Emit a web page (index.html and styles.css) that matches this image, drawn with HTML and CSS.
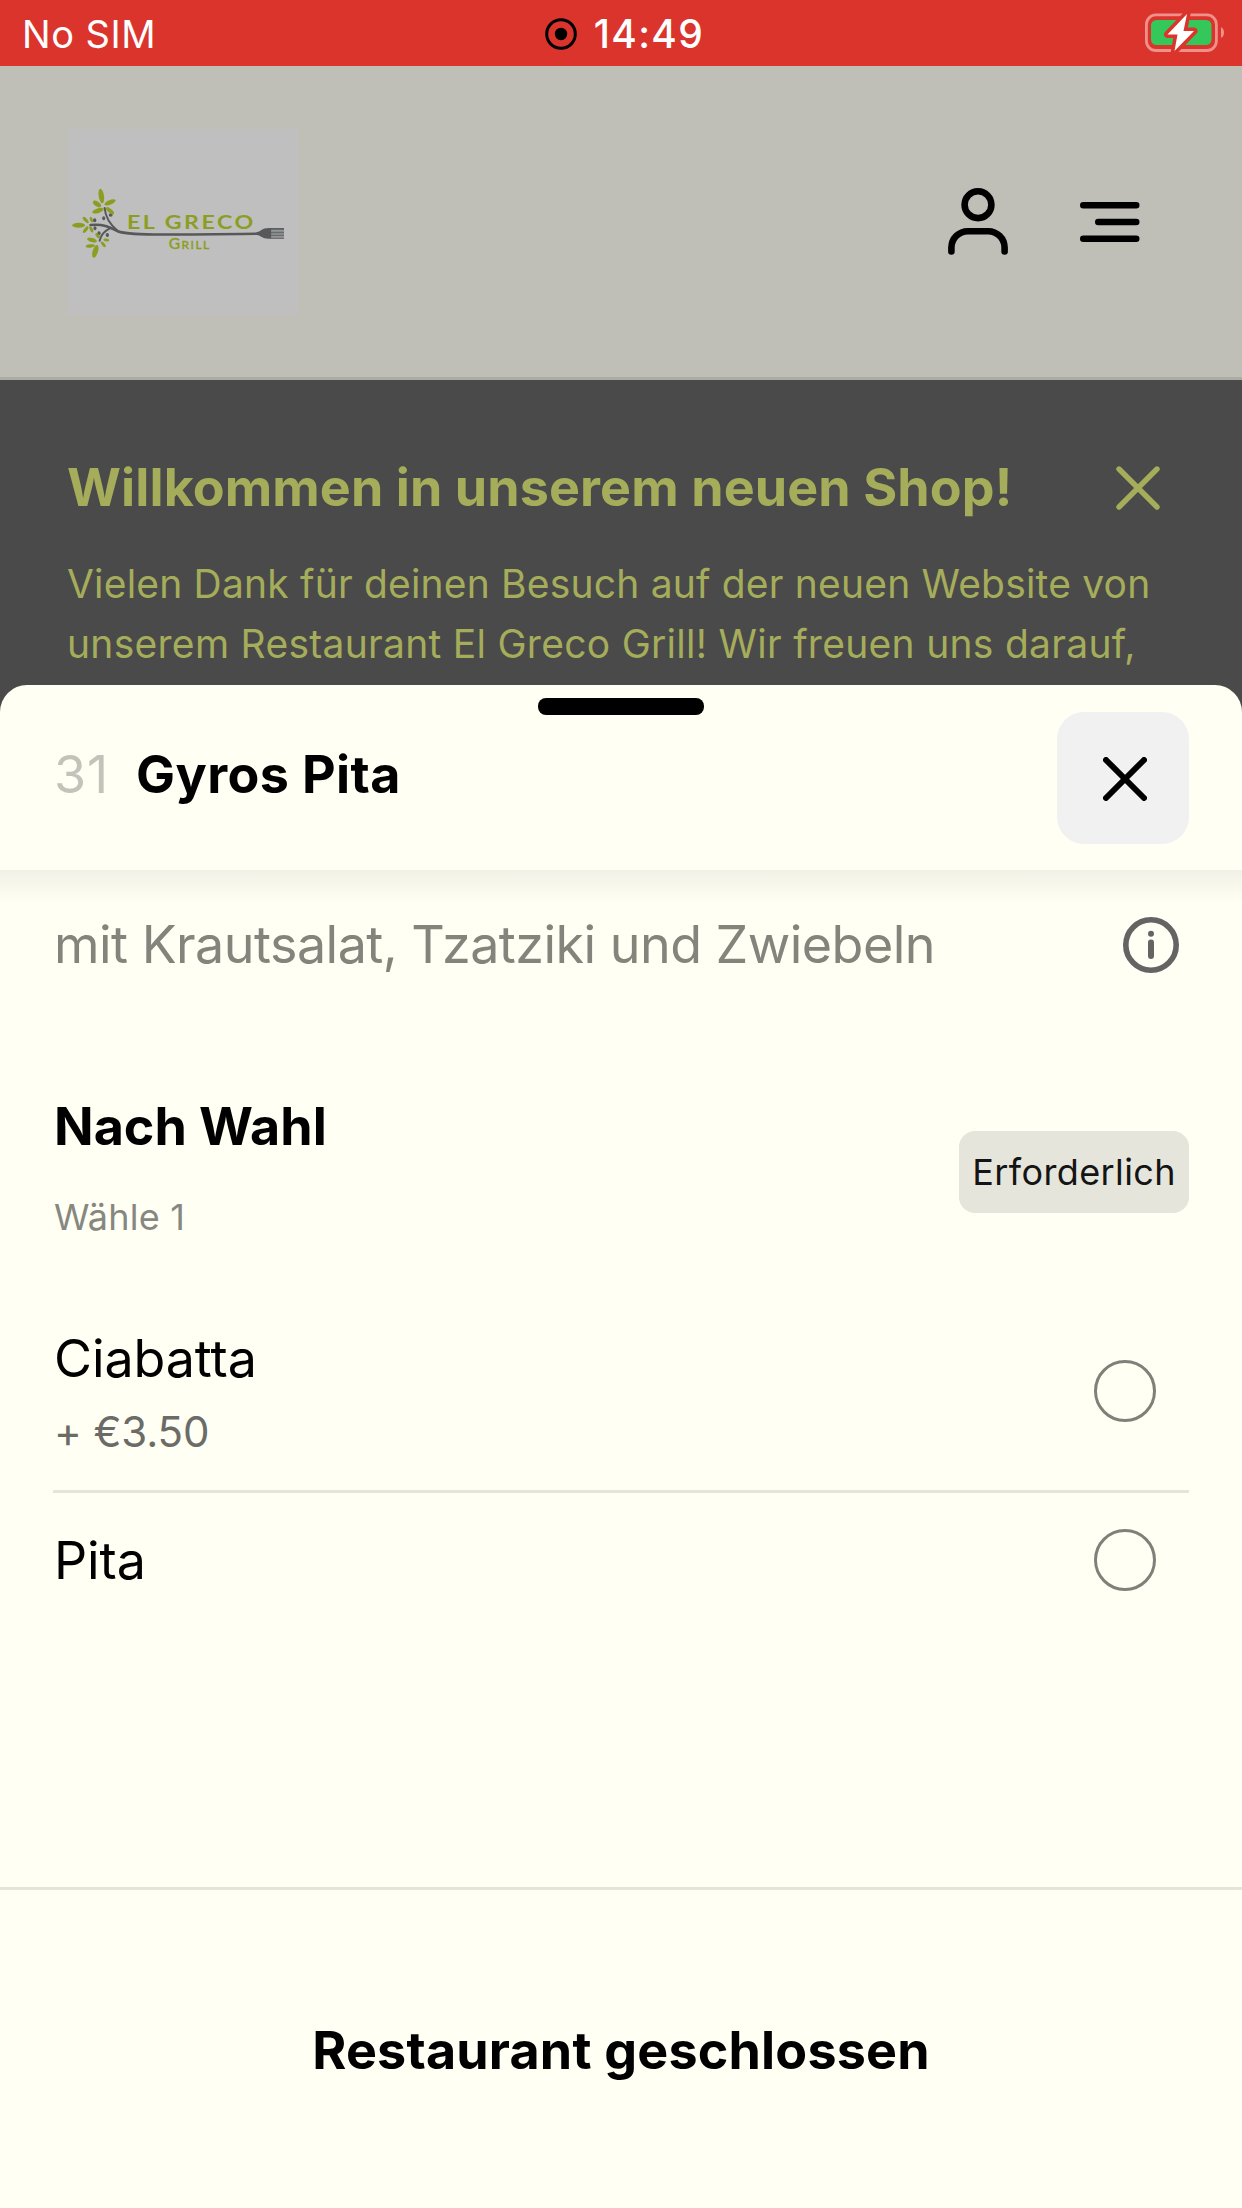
FILE: index.html
```html
<!DOCTYPE html>
<html lang="de">
<head>
<meta charset="utf-8">
<meta name="viewport" content="width=device-width, initial-scale=1">
<title>El Greco Grill</title>
<link rel="stylesheet" href="styles.css">
</head>
<body>
<div class="screen">
  <div class="status">
    <span class="carrier">No SIM</span>
    <div class="clock">
      <svg class="record" viewBox="0 0 32 32" aria-hidden="true">
        <circle cx="16" cy="16" r="14.3" fill="none" stroke="#000" stroke-width="3"/>
        <circle cx="16" cy="16" r="6.2" fill="#000"/>
      </svg>
      <span class="time">14:49</span>
    </div>
    <svg class="battery" viewBox="0 0 80 40" aria-hidden="true">
      <rect x="1.4" y="1.9" width="70" height="35.6" rx="9.5" fill="none" stroke="#ee918c" stroke-width="2.8"/>
      <path d="M76 14v11q3-1.500 3-5.500t-3-5.500z" fill="#ee918c"/>
      <rect x="6" y="7" width="60.500" height="25" rx="5.500" fill="#34c759"/>
      <path d="M42 1 22.500 21.500h10L29.500 38 49 18H38.500z" fill="#fff" stroke="#da342d" stroke-width="7" stroke-linejoin="round" paint-order="stroke"/>
    </svg>
  </div>

  <header class="site-header">
    <svg class="logo" viewBox="21 27 693 558" role="img" aria-label="El Greco Grill">
      <rect x="21" y="27" width="693" height="558" fill="#bfbfbf"/>
      <g fill="none" stroke="#56585a" stroke-linecap="round">
        <path d="M92 315C130 311 150 322 172 333C196 346 300 345 600 341" stroke-width="8"/>
        <path d="M134 264C136 292 148 312 174 334" stroke-width="6"/>
        <path d="M119 362C123 345 132 333 150 325" stroke-width="6"/>
      </g>
      <path d="M590 337C604 334 606 324 626 324H672V330H634V335H672V340H634V344H672V348H634V353H672V356H626C606 356 604 347 590 345Z" fill="#56585a"/>
      <path d="M634 326H672V354H634Z" fill="#77797b" opacity=".6"/>
      <g fill="#56585a">
        <ellipse cx="131" cy="295" rx="4.500" ry="6"/><ellipse cx="152" cy="285" rx="6" ry="5"/>
        <ellipse cx="104" cy="301" rx="5" ry="6"/><ellipse cx="105" cy="325" rx="4.500" ry="6"/>
        <ellipse cx="117" cy="340" rx="5" ry="6"/><ellipse cx="142" cy="345" rx="5" ry="6"/>
      </g>
      <g fill="#8c9e22">
        <ellipse cx="124" cy="228" rx="8" ry="22" transform="rotate(-9 124 228)"/>
        <ellipse cx="150" cy="247" rx="18" ry="7" transform="rotate(-22 150 247)"/>
        <ellipse cx="111" cy="252" rx="14" ry="7" transform="rotate(34 111 252)"/>
        <ellipse cx="114" cy="272" rx="18" ry="7" transform="rotate(-18 114 272)"/>
        <ellipse cx="150" cy="272" rx="15" ry="6" transform="rotate(40 150 272)"/>
        <ellipse cx="56" cy="316" rx="19" ry="7.500"/>
        <ellipse cx="77" cy="300" rx="12" ry="5" transform="rotate(48 77 300)"/>
        <ellipse cx="94" cy="299" rx="9" ry="4" transform="rotate(66 94 299)"/>
        <ellipse cx="77" cy="329" rx="12" ry="5" transform="rotate(-52 77 329)"/>
        <ellipse cx="94" cy="328" rx="10" ry="4.500" transform="rotate(66 94 328)"/>
        <ellipse cx="96" cy="360" rx="15" ry="6" transform="rotate(18 96 360)"/>
        <ellipse cx="91" cy="378" rx="14" ry="5" transform="rotate(-5 91 378)"/>
        <ellipse cx="106" cy="394" rx="8" ry="20" transform="rotate(17 106 394)"/>
        <ellipse cx="130" cy="373" rx="10" ry="4.500" transform="rotate(52 130 373)"/>
        <ellipse cx="139" cy="360" rx="9" ry="4.500" transform="rotate(8 139 360)"/>
        <ellipse cx="113" cy="347" rx="9" ry="5" transform="rotate(55 113 347)"/>
      </g>
      <text class="logo-name" x="201" y="326" textLength="386" lengthAdjust="spacingAndGlyphs">EL GRECO</text>
      <text class="logo-sub" x="326" y="388" textLength="126" lengthAdjust="spacingAndGlyphs">G<tspan class="logo-small">RILL</tspan></text>
    </svg>
    <nav class="header-actions">
      <svg class="icon-user" viewBox="0 0 60 67" aria-label="Konto">
        <circle cx="30" cy="16.700" r="13.400"/>
        <path d="M3.400 63.500V59.500A16.500 16.500 0 0 1 19.900 43.200H40.100A16.500 16.500 0 0 1 56.600 59.500V63.500"/>
      </svg>
      <svg class="icon-menu" viewBox="0 0 60 40" aria-label="Menü">
        <path d="M3.300 3.300H56.200M18.300 20H56.200M3.300 36.700H56.200"/>
      </svg>
    </nav>
  </header>

  <section class="promo">
    <div class="promo-head">
      <h2 class="promo-title">Willkommen in unserem neuen Shop!</h2>
      <svg class="promo-close" viewBox="0 0 44 44" aria-label="Schließen"><path d="M3 3 41 41M41 3 3 41"/></svg>
    </div>
    <p class="promo-text"><span class="line-one">Vielen Dank für deinen Besuch auf der neuen Website von</span><br><span class="line-two">unserem Restaurant El Greco Grill! Wir freuen uns darauf,</span></p>
  </section>

  <main class="sheet">
    <div class="handle"></div>
    <div class="sheet-head">
      <span class="item-no">31</span>
      <h1 class="item-name">Gyros Pita</h1>
      <button class="close" aria-label="Schließen">
        <svg viewBox="0 0 44 44"><path d="M3 3 41 41M41 3 3 41"/></svg>
      </button>
    </div>

    <div class="sheet-body">
      <div class="description">
        <p class="desc-text">mit Krautsalat, Tzatziki und Zwiebeln</p>
        <svg class="info" viewBox="0 0 56 56" aria-label="Info">
          <circle cx="28" cy="28" r="25.200" fill="none" stroke="#646464" stroke-width="5.600"/>
          <circle cx="28" cy="16.700" r="3" fill="#646464"/>
          <path d="M28 25.500V39" stroke="#646464" stroke-width="6" stroke-linecap="round"/>
        </svg>
      </div>

      <div class="group">
        <div>
          <h2 class="group-title">Nach Wahl</h2>
          <p class="group-hint">Wähle 1</p>
        </div>
        <span class="badge">Erforderlich</span>
      </div>

      <label class="option">
        <span>
          <span class="option-name">Ciabatta</span>
          <span class="option-price">+ €3.50</span>
        </span>
        <span class="radio"></span>
      </label>
      <label class="option option-last">
        <span class="option-name">Pita</span>
        <span class="radio"></span>
      </label>
    </div>

    <footer class="sheet-foot">Restaurant geschlossen</footer>
  </main>
</div>
</body>
</html>
```
FILE: styles.css
```css
* { box-sizing: border-box; }

body {
  margin: 0;
  background: #fffff3;
  font-family: Inter, "Liberation Sans", sans-serif;
  color: #000;
}

h1, h2, p { margin: 0; }

.screen {
  display: flex;
  flex-direction: column;
  width: 1242px;
  height: 2208px;
  overflow: hidden;
}

/* Status bar */
.status {
  display: grid;
  grid-template-columns: 1fr auto 1fr;
  align-items: center;
  flex: none;
  height: 66px;
  padding: 0 17px 0 22px;
  background: #da342d;
  color: #fff;
  font-size: 38px;
  line-height: 66px;
}

.carrier { padding-top: 1px; letter-spacing: 0.5px; }
.clock { display: flex; align-items: center; gap: 17px; padding: 1px 0 0 2px; }
.record { width: 32px; height: 32px; }
.time { font-size: 39px; font-weight: 500; letter-spacing: 1.3px; }
.battery { justify-self: end; width: 80px; height: 40px; margin-bottom: 2px; }

/* Shop header, dimmed behind the sheet */
.site-header {
  display: flex;
  align-items: center;
  justify-content: space-between;
  flex: none;
  height: 314px;
  padding: 0 102px 0 67px;
  background: #bfbfb7;
  border-bottom: 3px solid #abaca5;
}

.logo { width: 231px; height: 186px; }
.logo-name, .logo-sub {
  fill: #8c9e22;
  font-family: Lato, sans-serif;
}
.logo-name { font-size: 56px; font-weight: 700; letter-spacing: 6px; }
.logo-sub { font-size: 43px; font-weight: 500; letter-spacing: 4px; stroke: #8c9e22; stroke-width: 1; }
.logo-small { font-size: 33px; }

.header-actions { display: flex; align-items: center; gap: 72px; }
.header-actions svg { fill: none; stroke: #000; stroke-width: 6.6; stroke-linecap: round; }
.icon-user { width: 60px; height: 67px; }
.icon-menu { width: 60px; height: 40px; }

/* Welcome banner */
.promo {
  flex: none;
  height: 345px;
  padding: 74px 82px 0 67px;
  background: #4a4a4a;
  color: #a5ad5a;
}

.promo-head { display: flex; align-items: center; justify-content: space-between; }
.promo-title { font-size: 52px; font-weight: 700; line-height: 68px; letter-spacing: 0.1px; }
.promo-close { width: 44px; height: 44px; fill: none; stroke: #a5ad5a; stroke-width: 5.4; stroke-linecap: round; }
.promo-text { margin-top: 32px; font-size: 39px; line-height: 60px; white-space: nowrap; }
.line-one { letter-spacing: 0.19px; }
.line-two { letter-spacing: 0.28px; }

/* Bottom sheet */
.sheet {
  position: relative;
  display: flex;
  flex-direction: column;
  flex: 1;
  margin-top: -40px;
  border-radius: 27px 27px 0 0;
  background: #fffff3;
}

.handle {
  position: absolute;
  top: 13px;
  left: 538px;
  width: 166px;
  height: 17px;
  border-radius: 8px;
  background: #000;
}

.sheet-head {
  display: flex;
  align-items: flex-start;
  flex: none;
  height: 185px;
  padding: 27px 53px 0;
  font-size: 52px;
  line-height: 68px;
}

.item-no { margin-top: 29px; width: 83px; padding-left: 1px; color: #c3c3bb; letter-spacing: 1px; }
.item-name { margin-top: 29px; font-size: 52px; font-weight: 700; letter-spacing: 0.4px; }
.close {
  display: flex;
  align-items: center;
  justify-content: center;
  width: 132px;
  height: 132px;
  margin-left: auto;
  padding: 2px 0 0 3px;
  border: 0;
  border-radius: 27px;
  background: #f1f1f2;
}
.close svg { width: 44px; height: 44px; fill: none; stroke: #000; stroke-width: 6; stroke-linecap: round; }

.sheet-body {
  flex: 1;
  padding: 41px 53px 0 54px;
  background: linear-gradient(#f1f1e7, #fffff3 34px);
}

.description { display: flex; align-items: center; justify-content: space-between; height: 68px; padding-right: 10px; }
.desc-text { color: #84847d; font-size: 52px; line-height: 68px; letter-spacing: -0.53px; }
.info { width: 56px; height: 56px; }

.group { display: flex; align-items: center; justify-content: space-between; height: 148px; margin-top: 114px; }
.group-title { font-size: 52px; font-weight: 700; line-height: 68px; letter-spacing: 0; }
.group-hint { margin-top: 32px; color: #878781; font-size: 36px; line-height: 48px; letter-spacing: 0.2px; }
.badge {
  height: 82px;
  margin-top: 9px;
  padding: 0 13px;
  border-radius: 16px;
  background: #e5e5dc;
  color: #141414;
  font-size: 36px;
  line-height: 83px;
  letter-spacing: 0.4px;
}

.option {
  display: flex;
  align-items: center;
  justify-content: space-between;
  height: 168px;
  margin: 84px 0 0 -1px;
  padding: 0 33px 31px 1px;
  border-bottom: 3px solid #e5e5db;
}
.option-name { display: block; font-size: 52px; line-height: 68px; letter-spacing: -0.1px; }
.option-price { display: block; margin-top: 11px; color: #6b6b68; font-size: 42px; line-height: 56px; letter-spacing: -0.1px; }
.option-last { height: 68px; margin-top: 34px; padding-bottom: 0; border: 0; }

.radio { width: 62px; height: 62px; margin-bottom: 2px; border: 3px solid #80807a; border-radius: 50%; }

.sheet-foot {
  flex: none;
  height: 321px;
  padding-top: 127px;
  border-top: 3px solid #e5e5db;
  font-size: 52px;
  font-weight: 700;
  line-height: 68px;
  letter-spacing: 0.19px;
  text-align: center;
}
```
